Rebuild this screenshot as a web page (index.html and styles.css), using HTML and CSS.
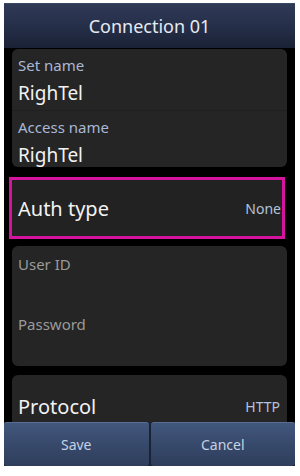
FILE: index.html
```html
<!DOCTYPE html>
<html lang="en">
<head>
    <meta charset="UTF-8">
    <meta name="viewport" content="width=device-width, initial-scale=1.0">
    <title>Connection 01</title>
    <link rel="stylesheet" href="styles.css">
</head>
<body>
    <div class="screen">
        <div class="header">Connection 01</div>

        <div class="content">
            <div class="card">
                <div class="field">
                    <span class="label">Set name</span>
                    <span class="value">RighTel</span>
                </div>
                <div class="field last">
                    <span class="label">Access name</span>
                    <span class="value">RighTel</span>
                </div>
            </div>

            <div class="option selected">
                <span class="option-name">Auth type</span>
                <span class="option-value">None</span>
            </div>

            <div class="card">
                <div class="input-row">
                    <span class="label muted">User ID</span>
                </div>
                <div class="input-row">
                    <span class="label muted">Password</span>
                </div>
            </div>

            <div class="card option">
                <span class="option-name">Protocol</span>
                <span class="option-value">HTTP</span>
            </div>
        </div>

        <div class="footer">
            <button class="btn">Save</button>
            <button class="btn">Cancel</button>
        </div>
    </div>
</body>
</html>
```

FILE: styles.css
```css
* {
    margin: 0;
    padding: 0;
    box-sizing: border-box;
}

body {
    background: #fff;
    font-family: 'Noto Sans', 'Open Sans', sans-serif;
}

.screen {
    margin: 3px 0 0 4px;
    width: 291px;
    height: 463px;
    background: #000;
    display: flex;
    flex-direction: column;
    overflow: hidden;
}

.header {
    height: 45px;
    flex: none;
    background: linear-gradient(180deg, #2f3a57 0%, #262f49 50%, #1b2236 100%);
    border-top: 1px solid #3a4666;
    color: #e6eaf2;
    font-size: 18px;
    display: flex;
    align-items: center;
    justify-content: center;
}

.content {
    flex: 1;
    overflow: hidden;
    padding: 1px 8px 0 8px;
    display: flex;
    flex-direction: column;
}

.card {
    background: #252525;
    border-radius: 6px;
    flex: none;
}

.field {
    display: flex;
    flex-direction: column;
    padding: 7px 6px 5px;
    border-bottom: 1px solid #1f1f1f;
}

.field.last {
    border-bottom: none;
    padding-bottom: 0;
}

.label {
    font-size: 15px;
    line-height: 18px;
    color: #a9b8d6;
}

.label.muted {
    color: #9a9a9a;
}

.value {
    font-size: 19px;
    line-height: 24px;
    margin-top: 7px;
    color: #f2f2f2;
}

.option {
    height: 62px;
    display: flex;
    align-items: center;
    justify-content: space-between;
    padding: 0 7px 0 6px;
    flex: none;
}

.option.selected {
    margin: 10px 2px 7px -3px;
    background: #222;
    border: 3px solid #d4149e;
    padding: 0 1px 0 6px;
}

.card.option {
    margin-top: 9px;
}

.option-name {
    font-size: 20px;
    color: #f2f2f2;
}

.option-value {
    font-size: 14px;
    color: #b4c2dc;
}

.input-row {
    height: 60px;
    padding: 7px 6px 0;
}

.footer {
    height: 44px;
    flex: none;
    display: flex;
    gap: 2px;
    background: #1a2233;
}

.btn {
    flex: 1;
    border: none;
    border-radius: 3px;
    background: linear-gradient(180deg, #42577d 0%, #37496b 50%, #2e3d5b 100%);
    border-top: 1px solid #5a6d92;
    color: #c6d1e4;
    font-family: 'Noto Sans', 'Open Sans', sans-serif;
    font-size: 14px;
}
```
